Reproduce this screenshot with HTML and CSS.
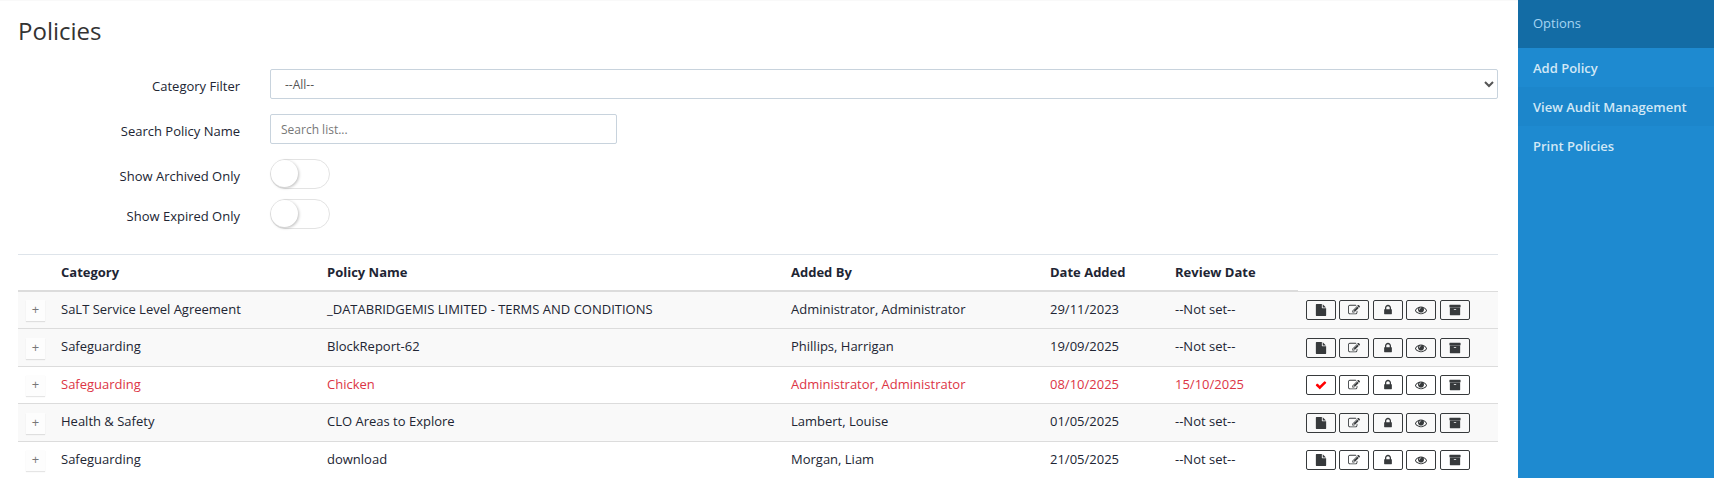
FILE: index.html
```html
<!DOCTYPE html>
<html lang="en">
<head>

	<meta charset="UTF-8">
	<title>Policies</title>

	<meta name="viewport" content="width=device-width, initial-scale=1">

	<link rel="stylesheet" href="styles.css">

</head>
<body>

	<svg class="sprite" aria-hidden="true">
		<symbol id="file" viewBox="0 0 1792 1792"><path d="M1152 512v-472q22 14 36 28l408 408q14 14 28 36h-472zm-128 32q0 40 28 68t68 28h544v1056q0 40-28 68t-68 28h-1344q-40 0-68-28t-28-68v-1600q0-40 28-68t68-28h800v544z"/></symbol>
		<symbol id="edit" viewBox="0 0 1792 1792"><path d="M888 1184l116-116-152-152-116 116v56h96v96h56zm440-720q-16-16-33 1l-350 350q-17 17-1 33t33-1l350-350q17-17 1-33zm80 594v190q0 119-84.5 203.5t-203.5 84.5h-832q-119 0-203.5-84.5t-84.5-203.5v-832q0-119 84.5-203.5t203.5-84.5h832q63 0 117 25 15 7 18 23 3 17-9 29l-49 49q-14 14-32 8-23-6-45-6h-832q-66 0-113 47t-47 113v832q0 66 47 113t113 47h832q66 0 113-47t47-113v-126q0-13 9-22l64-64q15-15 35-7t20 29zm-96-738l288 288-672 672h-288v-288zm444 132l-92 92-288-288 92-92q28-28 68-28t68 28l152 152q28 28 28 68t-28 68z"/></symbol>
		<symbol id="lock" viewBox="0 0 1792 1792"><path d="M640 768h512v-192q0-106-75-181t-181-75-181 75-75 181v192zm832 96v576q0 40-28 68t-68 28h-960q-40 0-68-28t-28-68v-576q0-40 28-68t68-28h32v-192q0-184 132-316t316-132 316 132 132 316v192h32q40 0 68 28t28 68z"/></symbol>
		<symbol id="eye" viewBox="0 0 1792 1792"><path d="M1664 960q-152-236-381-353 61 104 61 225 0 185-131.5 316.5t-316.5 131.5-316.5-131.5-131.5-316.5q0-121 61-225-229 117-381 353 133 205 333.5 326.5t434.5 121.5 434.5-121.5 333.5-326.5zm-720-384q0-20-14-34t-34-14q-125 0-214.5 89.5t-89.5 214.5q0 20 14 34t34 14 34-14 14-34q0-86 61-147t147-61q20 0 34-14t14-34zm848 384q0 34-20 69-140 230-376.5 368.5t-499.5 138.5-499.5-139-376.5-368q-20-35-20-69t20-69q140-229 376.5-368t499.5-139 499.5 139 376.5 368q20 35 20 69z"/></symbol>
		<symbol id="archive" viewBox="0 0 1792 1792"><path d="M1088 832q0-26-19-45t-45-19h-256q-26 0-45 19t-19 45 19 45 45 19h256q26 0 45-19t19-45zm576-192v960q0 26-19 45t-45 19h-1408q-26 0-45-19t-19-45v-960q0-26 19-45t45-19h1408q26 0 45 19t19 45zm64-448v256q0 26-19 45t-45 19h-1536q-26 0-45-19t-19-45v-256q0-26 19-45t45-19h1536q26 0 45 19t19 45z"/></symbol>
		<symbol id="check" viewBox="0 0 1792 1792"><path d="M1671 566q0 40-28 68l-724 724-136 136q-28 28-68 28t-68-28l-136-136-362-362q-28-28-28-68t28-68l136-136q28-28 68-28t68 28l294 295 656-657q28-28 68-28t68 28l136 136q28 28 28 68z"/></symbol>
	</svg>

	<div class="page">

		<main class="content">

			<h1>Policies</h1>

			<form class="filters">
				<div class="form-row">
					<label for="category">Category Filter</label>
					<select id="category" class="form-control">
						<option>--All--</option>
					</select>
				</div>
				<div class="form-row">
					<label for="search">Search Policy Name</label>
					<input type="text" id="search" class="form-control search" placeholder="Search list...">
				</div>
				<div class="form-row switch-row">
					<label for="archived">Show Archived Only</label>
					<input type="checkbox" id="archived" class="switch">
				</div>
				<div class="form-row switch-row">
					<label for="expired">Show Expired Only</label>
					<input type="checkbox" id="expired" class="switch">
				</div>
			</form>

			<table class="policies">
				<thead>
					<tr>
						<th class="col-expand"></th>
						<th class="col-category">Category</th>
						<th>Policy Name</th>
						<th class="col-added-by">Added By</th>
						<th class="col-date">Date Added</th>
						<th class="col-review">Review Date</th>
						<th class="col-actions"></th>
					</tr>
				</thead>
				<tbody>
					<tr class="striped">
						<td class="tools"><button type="button" class="expand">+</button></td>
						<td>SaLT Service Level Agreement</td>
						<td>_DATABRIDGEMIS LIMITED - TERMS AND CONDITIONS</td>
						<td>Administrator, Administrator</td>
						<td>29/11/2023</td>
						<td>--Not set--</td>
						<td class="tools">
							<button type="button" class="btn" aria-label="File"><svg><use href="#file"/></svg></button>
							<button type="button" class="btn" aria-label="Edit"><svg><use href="#edit"/></svg></button>
							<button type="button" class="btn" aria-label="Lock"><svg><use href="#lock"/></svg></button>
							<button type="button" class="btn" aria-label="View"><svg><use href="#eye"/></svg></button>
							<button type="button" class="btn" aria-label="Archive"><svg><use href="#archive"/></svg></button>
						</td>
					</tr>
					<tr class="striped">
						<td class="tools"><button type="button" class="expand">+</button></td>
						<td>Safeguarding</td>
						<td>BlockReport-62</td>
						<td>Phillips, Harrigan</td>
						<td>19/09/2025</td>
						<td>--Not set--</td>
						<td class="tools">
							<button type="button" class="btn" aria-label="File"><svg><use href="#file"/></svg></button>
							<button type="button" class="btn" aria-label="Edit"><svg><use href="#edit"/></svg></button>
							<button type="button" class="btn" aria-label="Lock"><svg><use href="#lock"/></svg></button>
							<button type="button" class="btn" aria-label="View"><svg><use href="#eye"/></svg></button>
							<button type="button" class="btn" aria-label="Archive"><svg><use href="#archive"/></svg></button>
						</td>
					</tr>
					<tr class="overdue">
						<td class="tools"><button type="button" class="expand">+</button></td>
						<td>Safeguarding</td>
						<td>Chicken</td>
						<td>Administrator, Administrator</td>
						<td>08/10/2025</td>
						<td>15/10/2025</td>
						<td class="tools">
							<button type="button" class="btn btn-check" aria-label="Reviewed"><svg><use href="#check"/></svg></button>
							<button type="button" class="btn" aria-label="Edit"><svg><use href="#edit"/></svg></button>
							<button type="button" class="btn" aria-label="Lock"><svg><use href="#lock"/></svg></button>
							<button type="button" class="btn" aria-label="View"><svg><use href="#eye"/></svg></button>
							<button type="button" class="btn" aria-label="Archive"><svg><use href="#archive"/></svg></button>
						</td>
					</tr>
					<tr class="striped">
						<td class="tools"><button type="button" class="expand">+</button></td>
						<td>Health &amp; Safety</td>
						<td>CLO Areas to Explore</td>
						<td>Lambert, Louise</td>
						<td>01/05/2025</td>
						<td>--Not set--</td>
						<td class="tools">
							<button type="button" class="btn" aria-label="File"><svg><use href="#file"/></svg></button>
							<button type="button" class="btn" aria-label="Edit"><svg><use href="#edit"/></svg></button>
							<button type="button" class="btn" aria-label="Lock"><svg><use href="#lock"/></svg></button>
							<button type="button" class="btn" aria-label="View"><svg><use href="#eye"/></svg></button>
							<button type="button" class="btn" aria-label="Archive"><svg><use href="#archive"/></svg></button>
						</td>
					</tr>
					<tr>
						<td class="tools"><button type="button" class="expand">+</button></td>
						<td>Safeguarding</td>
						<td>download</td>
						<td>Morgan, Liam</td>
						<td>21/05/2025</td>
						<td>--Not set--</td>
						<td class="tools">
							<button type="button" class="btn" aria-label="File"><svg><use href="#file"/></svg></button>
							<button type="button" class="btn" aria-label="Edit"><svg><use href="#edit"/></svg></button>
							<button type="button" class="btn" aria-label="Lock"><svg><use href="#lock"/></svg></button>
							<button type="button" class="btn" aria-label="View"><svg><use href="#eye"/></svg></button>
							<button type="button" class="btn" aria-label="Archive"><svg><use href="#archive"/></svg></button>
						</td>
					</tr>
				</tbody>
			</table>

		</main>

		<nav class="sidebar">
			<h2>Options</h2>
			<ul>
				<li><a href="#">Add Policy</a></li>
				<li class="active"><a href="#">View Audit Management</a></li>
				<li><a href="#">Print Policies</a></li>
			</ul>
		</nav>

	</div>

</body>
</html>
```

FILE: styles.css
```css
*,
*:before,
*:after {
	box-sizing: border-box;
}

body {
	margin: 0;
	font-family: "Open Sans", "Noto Sans", sans-serif;
	font-size: 13px;
	line-height: 20px;
	color: #212533;
	background: #fff;
}

button,
input,
select {
	font-family: inherit;
	margin: 0;
}

.sprite {
	display: none;
}

.page {
	display: flex;
	min-height: 100vh;
}

.content {
	flex: 1;
	min-width: 0;
	padding: 0 20px 0 18px;
	border-top: 1px solid #f9f9f9;
}

h1 {
	margin: 14px 0 22px;
	font-size: 24px;
	font-weight: 400;
	line-height: 32px;
	color: #333;
}

/* filters */

.form-row {
	display: flex;
	margin-bottom: 15px;
}

.form-row label {
	width: 222px;
	margin-right: 30px;
	padding-top: 7px;
	text-align: right;
}

.form-control {
	flex: 1;
	height: 30px;
	padding: 0 10px;
	font-size: 12px;
	color: #555;
	background: #fff;
	border: 1px solid #c8d3dd;
	border-radius: 2px;
}

.form-control::placeholder {
	color: #777;
}

.search {
	flex: none;
	width: 347px;
}

.switch-row {
	margin-bottom: 10px;
}

.switch {
	appearance: none;
	width: 60px;
	height: 30px;
	border: 1px solid #e3e3e3;
	border-radius: 15px;
	background: #fff;
}

.switch:before {
	content: "";
	display: block;
	width: 27px;
	height: 27px;
	border-radius: 50%;
	background: #fff;
	box-shadow: 1px 1px 3px rgba(0, 0, 0, .25);
}

.switch:checked:before {
	margin-left: 31px;
}

/* table */

.policies {
	width: 100%;
	margin-top: 25px;
	table-layout: fixed;
	border-collapse: separate;
	border-spacing: 0;
}

.policies th {
	height: 38px;
	padding: 7px 8px;
	text-align: left;
	vertical-align: top;
	font-weight: 700;
	border-top: 1px solid #dee4ea;
	border-bottom: 2px solid #dcdcdc;
}

.policies td {
	height: 37px;
	padding: 7px 8px;
	vertical-align: top;
	border-bottom: 1px solid #dcdcdc;
}

.policies tr:nth-child(even) td {
	height: 38px;
}

.policies th.col-actions {
	border-bottom-width: 1px;
}

.policies .tools {
	padding: 8px 8px 7px;
	white-space: nowrap;
}

.policies tr:nth-child(even) .tools {
	padding-top: 9px;
}

.col-expand {
	width: 35px;
}

.col-category {
	width: 266px;
}

.col-added-by {
	width: 259px;
}

.col-date {
	width: 125px;
}

.col-review {
	width: 131px;
}

.col-actions {
	width: 200px;
}

.striped {
	background: #f9f9f9;
}

.overdue {
	color: #dc3545;
}

.expand {
	display: block;
	width: 19px;
	height: 21px;
	padding: 0 0 2px;
	font-size: 13px;
	line-height: 19px;
	color: #777;
	background: #fdfdfd;
	border: 0;
	box-shadow: 0 1px 1px rgba(0, 0, 0, .1);
}

.btn {
	display: inline-flex;
	align-items: center;
	justify-content: center;
	width: 30px;
	height: 20px;
	padding: 0;
	vertical-align: top;
	color: #373a3c;
	background: transparent;
	border: 1px solid #373a3c;
	border-radius: 2px;
}

.btn svg {
	width: 12px;
	height: 12px;
	fill: currentColor;
}

.btn-check svg {
	fill: #f00;
}

/* sidebar */

.sidebar {
	width: 196px;
	background: #1e8ad0;
}

.sidebar h2 {
	margin: 0;
	padding: 13px 15px 15px;
	font-size: 13px;
	font-weight: 400;
	line-height: 20px;
	color: #a5d5f3;
	background: #136ca5;
}

.sidebar ul {
	margin: 0;
	padding: 0;
	list-style: none;
}

.sidebar a {
	display: block;
	padding: 10px 15px 9px;
	font-weight: 600;
	color: #d2e8f6;
	text-decoration: none;
}

.sidebar .active {
	background: #1c86cb;
}
```
